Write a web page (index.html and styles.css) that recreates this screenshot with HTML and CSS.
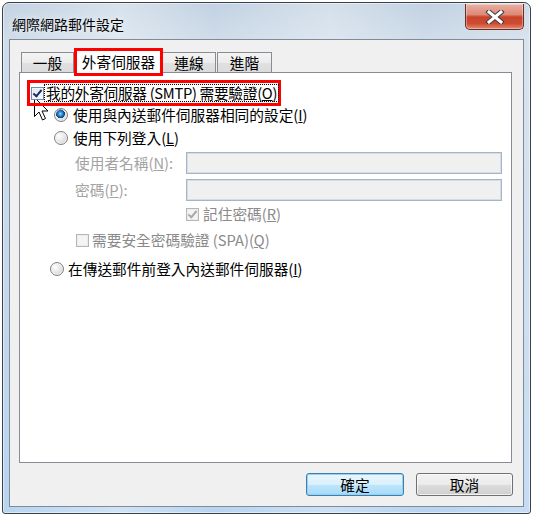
FILE: index.html
```html
<!DOCTYPE html>
<html lang="zh-Hant">
<head>
    <meta charset="UTF-8">
    <title>網際網路郵件設定</title>
    <link rel="stylesheet" href="styles.css">
</head>
<body>
    <div class="window">
        <div class="titlebar">
            <span class="title">網際網路郵件設定</span>
            <div class="close">
                <svg width="20" height="14" viewBox="0 0 20 14">
                    <path d="M4 2 L16 12 M16 2 L4 12" stroke="#3b3b45" stroke-width="5" stroke-linecap="square"/>
                    <path d="M4 2 L16 12 M16 2 L4 12" stroke="#ffffff" stroke-width="3" stroke-linecap="square"/>
                </svg>
            </div>
        </div>

        <div class="client">
            <div class="tabs">
                <div class="tab tab-first">一般</div>
                <div class="tab active">外寄伺服器</div>
                <div class="tab tab-third">連線</div>
                <div class="tab tab-last">進階</div>
            </div>

            <div class="panel">
                <svg class="cursor" width="16" height="25" viewBox="0 0 16 25">
                    <path d="M0.5 0.5 V19.5 L5 15 L8.5 23 L11.5 21.5 L8 14 H14 Z" fill="#fff" stroke="#000" stroke-width="1"/>
                </svg>

                <div class="row row-auth">
                    <span class="check checked"></span>
                    <span class="focus">我的外寄伺服器 (SMTP) 需要驗證(<u>O</u>)</span>
                </div>
                <div class="row row-same">
                    <span class="radio on"></span>
                    <span>使用與內送郵件伺服器相同的設定(<u>I</u>)</span>
                </div>
                <div class="row row-login">
                    <span class="radio"></span>
                    <span>使用下列登入(<u>L</u>)</span>
                </div>
                <div class="row row-field row-user">
                    <span class="label">使用者名稱(<u>N</u>):</span>
                    <span class="input"></span>
                </div>
                <div class="row row-field row-pass">
                    <span class="label">密碼(<u>P</u>):</span>
                    <span class="input"></span>
                </div>
                <div class="row row-remember">
                    <span class="check disabled checked"></span>
                    <span class="muted">記住密碼(<u>R</u>)</span>
                </div>
                <div class="row row-spa">
                    <span class="check disabled"></span>
                    <span class="muted">需要安全密碼驗證 (SPA)(<u>Q</u>)</span>
                </div>
                <div class="row row-before">
                    <span class="radio"></span>
                    <span>在傳送郵件前登入內送郵件伺服器(<u>I</u>)</span>
                </div>
            </div>

            <div class="buttons">
                <button class="btn btn-default">確定</button>
                <button class="btn btn-cancel">取消</button>
            </div>
        </div>
    </div>
</body>
</html>
```

FILE: styles.css
```css
body {
    margin: 0;
    background-color: white;
    font-family: "Noto Sans CJK TC", "Noto Sans", sans-serif;
    font-size: 14.7px;
    color: black;
}

u {
    text-decoration: underline;
    text-underline-offset: 1px;
}

/* window frame */

.window {
    box-sizing: border-box;
    width: 529px;
    height: 512px;
    margin: 2px 0 0 2px;
    padding: 0 6px 6px 6px;
    border: 1px solid #3b4148;
    border-radius: 7px 7px 3px 3px;
    display: flex;
    flex-direction: column;
    background:
        linear-gradient(90deg, rgba(255,255,255,0) 0%, rgba(255,255,255,0.35) 22%, rgba(255,255,255,0) 40%, rgba(255,255,255,0.3) 62%, rgba(255,255,255,0) 80%, rgba(255,255,255,0.2) 100%),
        linear-gradient(180deg, #c2d2e2 0%, #cfdce9 36px, #c3d7ec 60%, #b7d4f1 100%);
    box-shadow: inset 0 0 0 1px rgba(255, 255, 255, 0.5);
}

.titlebar {
    height: 36px;
    position: relative;
    flex-shrink: 0;
}

.title {
    display: block;
    margin: 11px 0 0 3px;
    font-size: 14px;
    line-height: 20px;
    text-shadow: 0 0 6px rgba(255, 255, 255, 0.9);
}

.close {
    position: absolute;
    top: 1px;
    right: 0;
    box-sizing: border-box;
    width: 59px;
    height: 26px;
    border: 1px solid #6b2e25;
    border-top: none;
    border-radius: 0 0 5px 5px;
    background: linear-gradient(180deg, #e8b1a4 0%, #dd8a77 42%, #c8432a 52%, #cf4b30 78%, #e28a72 100%);
    box-shadow: inset 0 0 0 1px rgba(255, 255, 255, 0.35);
    display: flex;
    align-items: center;
    justify-content: center;
}

/* client area */

.client {
    flex: 1;
    border: 1px solid #7f8b98;
    background-color: #f0f0f0;
    padding: 8px 11px 0 9px;
    display: flex;
    flex-direction: column;
}

.tabs {
    display: flex;
    align-items: flex-end;
    height: 28px;
    padding-left: 2px;
    margin-bottom: -4px;
    position: relative;
    z-index: 2;
}

.tab {
    box-sizing: border-box;
    height: 20px;
    margin-bottom: 4px;
    border: 1px solid #898c95;
    border-bottom: none;
    background: linear-gradient(180deg, #f4f4f4 0%, #ececec 50%, #e0e0e0 51%, #dcdcdc 100%);
    line-height: 20px;
    text-align: center;
}

.tab-first {
    width: 53px;
}

.tab-third {
    width: 53px;
    border-left: none;
}

.tab-last {
    width: 55px;
    margin-left: 1px;
}

.tab.active {
    width: 89px;
    height: 28px;
    margin-bottom: 0;
    border: 3px solid #ff0000;
    background: white;
    line-height: 22px;
}

.panel {
    box-sizing: border-box;
    height: 391px;
    border: 1px solid #898c95;
    background-color: white;
    padding-top: 7px;
    position: relative;
}

.cursor {
    position: absolute;
    left: 14px;
    top: 24px;
    z-index: 1;
}

/* rows */

.row {
    display: flex;
    align-items: center;
    height: 20px;
    line-height: 20px;
    white-space: nowrap;
}

.row-auth {
    box-sizing: border-box;
    width: 254px;
    height: 26px;
    margin-left: 7px;
    padding-left: 1px;
    border: 3px solid #ff0000;
    position: relative;
    z-index: 2;
}

.row-auth .focus {
    margin-left: 1px;
    padding: 0 1px;
    line-height: 16px;
    letter-spacing: -0.3px;
    outline: 1px dotted #000;
}

.row-same {
    margin: -1px 0 0 34px;
    gap: 5px;
}

.row-login {
    margin: 3px 0 0 34px;
    gap: 5px;
}

.row-field {
    height: 22px;
    margin-left: 55px;
}

.row-user {
    margin-top: 4px;
}

.row-pass {
    margin-top: 5px;
}

.label {
    width: 111px;
    color: #a3a3a3;
}

.input {
    box-sizing: border-box;
    width: 316px;
    height: 22px;
    border: 1px solid #aab3be;
    background-color: #f0f0f0;
    box-shadow: inset 0 0 0 1px #cfdeee;
}

.row-remember {
    margin: 3px 0 0 166px;
    gap: 4px;
}

.row-spa {
    margin: 6px 0 0 56px;
    gap: 3px;
}

.row-before {
    margin: 9px 0 0 30px;
    gap: 4px;
}

.muted {
    color: #8a8a8a;
}

/* checkbox + radio */

.check {
    box-sizing: border-box;
    width: 13px;
    height: 13px;
    flex-shrink: 0;
    border: 1px solid #6f8db4;
    background: linear-gradient(135deg, #dfe3e8 0%, #ffffff 100%);
    box-shadow: inset 0 0 0 1px #f4f4f4;
    position: relative;
}

.check.checked::after {
    content: "";
    position: absolute;
    left: 3px;
    top: 0;
    width: 3px;
    height: 7px;
    border: solid #1c2b6b;
    border-width: 0 2px 2px 0;
    transform: rotate(40deg);
}

.check.disabled {
    border-color: #b6b6b6;
    background: #f4f4f4;
    box-shadow: inset 0 0 0 1px #ececec;
}

.check.disabled.checked::after {
    border-color: #a9a9a9;
}

.radio {
    box-sizing: border-box;
    width: 14px;
    height: 14px;
    flex-shrink: 0;
    border-radius: 50%;
    border: 1px solid #7f8080;
    background: radial-gradient(circle at 35% 35%, #ffffff 0%, #e2e2e2 55%, #c4c4c4 100%);
    box-shadow: inset 0 0 0 1px rgba(255, 255, 255, 0.6);
}

.radio.on {
    background:
        radial-gradient(circle at 45% 40%, #9ad9fa 0%, #2a8ad4 22%, #0d3f7a 44%, rgba(0,0,0,0) 47%),
        radial-gradient(circle at 35% 35%, #ffffff 0%, #e2e2e2 55%, #c4c4c4 100%);
}

/* buttons */

.buttons {
    display: flex;
    justify-content: flex-end;
    gap: 12px;
    margin: 10px -1px 0 0;
}

.btn {
    box-sizing: border-box;
    height: 23px;
    padding: 0;
    font-family: inherit;
    font-size: 14.7px;
    line-height: 20px;
    color: black;
    border: 1px solid #707070;
    border-radius: 3px;
    background: linear-gradient(180deg, #f2f2f2 0%, #ebebeb 50%, #dddddd 51%, #cfcfcf 100%);
    box-shadow: inset 0 0 0 1px rgba(255, 255, 255, 0.7);
}

.btn-default {
    width: 98px;
    border-color: #3c7fb1;
    background: linear-gradient(180deg, #eaf6fd 0%, #d9f0fc 50%, #bee6fd 51%, #a7d9f5 100%);
    box-shadow: inset 0 0 0 1px #98d1ef;
}

.btn-cancel {
    width: 97px;
}
```
